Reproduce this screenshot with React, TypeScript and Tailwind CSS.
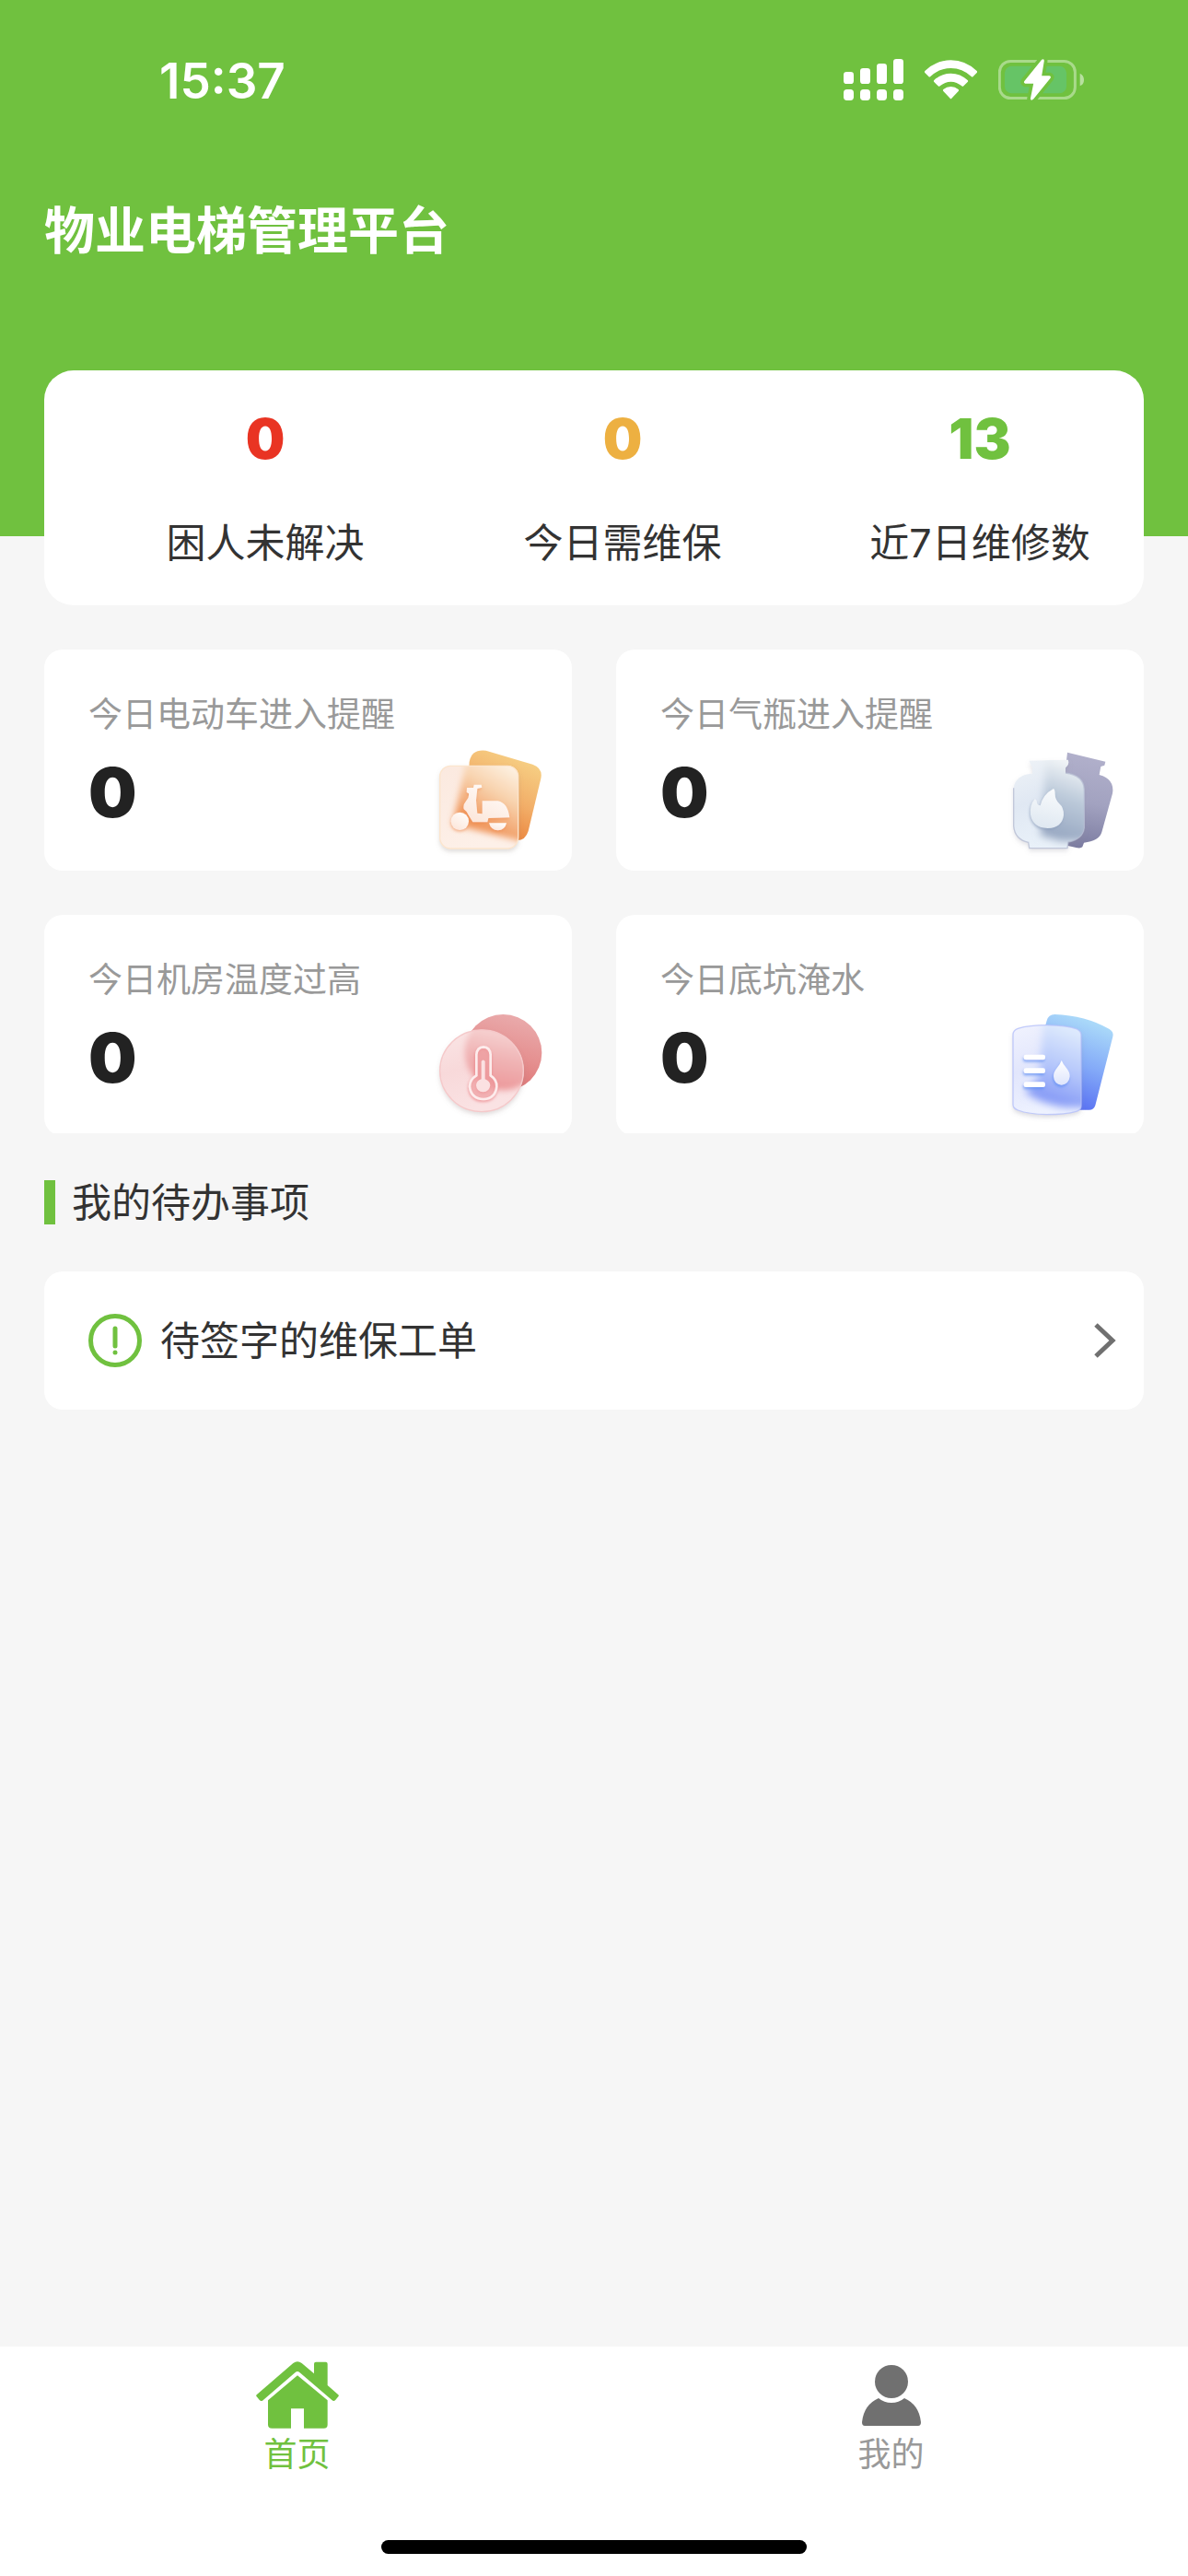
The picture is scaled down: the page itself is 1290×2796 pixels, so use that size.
import type { ReactNode } from 'react';

function SignalIcon() {
  return (
    <svg viewBox="108 72 195 135" className="h-[45px] w-[65px]" fill="#fff" aria-hidden="true">
      <rect x="108" y="114" width="33" height="39" rx="10" />
      <rect x="162" y="102" width="33" height="51" rx="10" />
      <rect x="216" y="87" width="33" height="66" rx="10" />
      <rect x="270" y="72" width="33" height="81" rx="10" />
      <rect x="108" y="171" width="33" height="36" rx="11" />
      <rect x="162" y="171" width="33" height="36" rx="11" />
      <rect x="216" y="171" width="33" height="36" rx="11" />
      <rect x="270" y="171" width="33" height="36" rx="11" />
    </svg>
  );
}

function WifiIcon() {
  return (
    <svg viewBox="372 72 171 135" className="h-[45px] w-[57px]" fill="#fff" aria-hidden="true">
      <path d="M373 111 Q410 76 457.500 76 Q505 76 542 111 Q545 114 542 117 L530 129 Q527 132 524 129 Q495 102 457.500 102 Q420 102 391 129 Q388 132 385 129 L373 117 Q370 114 373 111 Z" />
      <path d="M403 141 Q427 119 457.500 119 Q488 119 512 141 Q515 144 512 147 L499 160 Q496 163 493 160 Q477 146 457.500 146 Q438 146 422 160 Q419 163 416 160 L403 147 Q400 144 403 141 Z" />
      <path d="M433 171 Q444 162 457.500 162 Q471 162 482 171 Q485 174 482 177 L460 200 Q457.500 203 455 200 L433 177 Q430 174 433 171 Z" />
    </svg>
  );
}

function BatteryIcon() {
  return (
    <svg viewBox="612 72 280 135" className="h-[45px] w-[93px]" aria-hidden="true">
      <rect x="616" y="79" width="247" height="121" rx="36" fill="none" stroke="#fff" strokeOpacity="0.4" strokeWidth="9" />
      <rect x="633" y="95" width="202" height="89" rx="23" fill="#66c466" />
      <path d="M879 119 Q892 125 892 140 Q892 155 879 160 Z" fill="#fff" fillOpacity="0.5" />
      <path
        d="M754 74 Q762 69 762 78 L754 127 L779 127 Q786 129 782 135 L727 203 Q719 210 717 202 L727 152 L700 152 Q693 149 698 143 Z"
        fill="#fff"
        stroke="#70c13f"
        strokeWidth="22"
        strokeLinejoin="round"
        paintOrder="stroke"
      />
    </svg>
  );
}

function ScooterIcon() {
  return (
    <svg viewBox="36 24 372 372" className="size-[124px]" aria-hidden="true">
      <defs>
        <linearGradient id="scBack" x1="0.85" y1="0.15" x2="0.5" y2="1">
          <stop offset="0" stopColor="#f6cd82" />
          <stop offset="0.5" stopColor="#f2ae68" />
          <stop offset="1" stopColor="#ea813a" />
        </linearGradient>
        <linearGradient id="scFront" x1="0.9" y1="0" x2="0.4" y2="1">
          <stop offset="0.05" stopColor="#fffaf2" />
          <stop offset="0.45" stopColor="#f8d3ae" />
          <stop offset="0.85" stopColor="#f0955a" />
        </linearGradient>
        <linearGradient id="scBase" x1="0" y1="0" x2="0.4" y2="1">
          <stop offset="0" stopColor="#fbe9df" />
          <stop offset="1" stopColor="#fdf0e8" />
        </linearGradient>
        <linearGradient id="scGlyph" x1="0.8" y1="0" x2="0.2" y2="1">
          <stop offset="0" stopColor="#fffdfb" />
          <stop offset="1" stopColor="#fce6da" />
        </linearGradient>
        <clipPath id="scClip">
          <rect x="55" y="93" width="257" height="271" rx="36" />
        </clipPath>
        <filter id="scBlur" x="-30%" y="-30%" width="160%" height="160%">
          <feGaussianBlur stdDeviation="11" />
        </filter>
        <filter id="scDrop" x="-30%" y="-30%" width="160%" height="160%">
          <feDropShadow dx="0" dy="9" stdDeviation="8" floodColor="#8a8078" floodOpacity="0.28" />
        </filter>
        <filter id="scGlow" x="-30%" y="-30%" width="160%" height="160%">
          <feDropShadow dx="-1" dy="6" stdDeviation="5" floodColor="#ee8848" floodOpacity="0.5" />
        </filter>
      </defs>
      <path d="M206 44 L358 89 Q392 101 385 135 L344 306 Q335 336 308 336 L140 290 L152 80 Q160 38 206 44 Z" fill="url(#scBack)" />
      <rect x="55" y="93" width="257" height="271" rx="36" fill="url(#scBase)" filter="url(#scDrop)" />
      <g clipPath="url(#scClip)">
        <path d="M146 60 L340 60 L340 350 L300 334 L98 284 Z" fill="url(#scFront)" filter="url(#scBlur)" />
      </g>
      <rect x="56" y="94" width="255" height="269" rx="35" fill="none" stroke="#fce5cd" strokeWidth="4" />
      <g fill="url(#scGlyph)" filter="url(#scGlow)">
        <circle cx="121" cy="274" r="29" />
        <path d="M167 155 L191 155 L193 164 L178 168 L174 206 L178 248 L194 250 L194 208 L245 208 Q277 214 283 262 L214 264 L211 277 L163 277 L151 257 Q146 243 134 235 Q130 221 142 207 Q152 197 150 184 L143 180 L144 165 L165 165 Z" />
        <path d="M216 280 L273 280 Q268 303 245 304 Q222 303 216 280 Z" />
      </g>
    </svg>
  );
}

function GasIcon() {
  return (
    <svg viewBox="36 24 372 372" className="size-[124px]" aria-hidden="true">
      <defs>
        <linearGradient id="gsBack" x1="0.3" y1="0" x2="0.2" y2="1">
          <stop offset="0" stopColor="#b1b0cb" />
          <stop offset="0.5" stopColor="#a2a2c0" />
          <stop offset="1" stopColor="#7a7a9f" />
        </linearGradient>
        <linearGradient id="gsBase" x1="0" y1="0" x2="0.3" y2="1">
          <stop offset="0" stopColor="#eff3f7" />
          <stop offset="0.5" stopColor="#e0e8f3" />
          <stop offset="1" stopColor="#e9f1f9" />
        </linearGradient>
        <linearGradient id="gsHaze" x1="0.6" y1="0" x2="0.4" y2="1">
          <stop offset="0.1" stopColor="#f3f6f8" />
          <stop offset="0.5" stopColor="#bccada" />
          <stop offset="1" stopColor="#95a5c0" />
        </linearGradient>
        <linearGradient id="gsFlame" x1="0.6" y1="0" x2="0.4" y2="1">
          <stop offset="0" stopColor="#f8fafc" />
          <stop offset="1" stopColor="#dfe8f1" />
        </linearGradient>
        <path
          id="gsBottle"
          d="M112 77 L239 74 Q245 88 231 99 L231 117 Q290 124 292 170 L292 295 Q288 332 240 342 L237 362 L113 362 L110 343 Q66 334 62 290 L62 166 Q68 122 123 119 L123 99 Z"
        />
        <clipPath id="gsClip">
          <use href="#gsBottle" />
        </clipPath>
        <filter id="gsBlur" x="-30%" y="-30%" width="160%" height="160%">
          <feGaussianBlur stdDeviation="13" />
        </filter>
        <filter id="gsDrop" x="-30%" y="-30%" width="160%" height="160%">
          <feDropShadow dx="0" dy="9" stdDeviation="8" floodColor="#8a8a98" floodOpacity="0.25" />
        </filter>
        <filter id="gsGlow" x="-30%" y="-30%" width="160%" height="160%">
          <feDropShadow dx="-2" dy="5" stdDeviation="5" floodColor="#8b9dba" floodOpacity="0.7" />
        </filter>
      </defs>
      <path
        d="M237 50 L361 80 L358 92 L346 96 L341 123 Q392 137 384 184 L349 310 Q339 340 291 344 L286 358 Q280 364 262 359 L200 345 L200 120 L230 112 Z"
        fill="url(#gsBack)"
      />
      <use href="#gsBottle" fill="url(#gsBase)" filter="url(#gsDrop)" />
      <g clipPath="url(#gsClip)">
        <path d="M170 50 L310 60 L310 340 L215 338 L150 320 Z" fill="url(#gsHaze)" filter="url(#gsBlur)" />
      </g>
      <path
        d="M62 166 L62 290 Q66 334 110 343 L113 362 L237 362 L240 342 Q288 332 292 295 L292 170 Q290 124 231 117"
        fill="none"
        stroke="#b3bad0"
        strokeOpacity="0.75"
        strokeWidth="4"
      />
      <path
        d="M192 168 Q197 171 197 185 Q197 203 210 216 Q226 230 225 254 Q220 295 173 297 Q125 296 117 253 Q114 220 131 202 Q137 203 138 213 Q140 223 149 223 Q157 187 192 168 Z"
        fill="url(#gsFlame)"
        filter="url(#gsGlow)"
      />
    </svg>
  );
}

function TemperatureIcon() {
  return (
    <svg viewBox="36 33 372 372" className="size-[124px]" aria-hidden="true">
      <defs>
        <linearGradient id="tpBack" x1="0.8" y1="0.1" x2="0.55" y2="1">
          <stop offset="0" stopColor="#e9a8a9" />
          <stop offset="0.5" stopColor="#e59090" />
          <stop offset="1" stopColor="#dd7373" />
        </linearGradient>
        <linearGradient id="tpBase" x1="0" y1="0" x2="0.3" y2="1">
          <stop offset="0" stopColor="#fae6e6" />
          <stop offset="0.5" stopColor="#f8d9da" />
          <stop offset="1" stopColor="#fae2e3" />
        </linearGradient>
        <linearGradient id="tpHaze" x1="0.6" y1="0" x2="0.4" y2="1">
          <stop offset="0.1" stopColor="#f8dedd" />
          <stop offset="0.6" stopColor="#f0b3b4" />
          <stop offset="1" stopColor="#ec9799" />
        </linearGradient>
        <clipPath id="tpClip">
          <ellipse cx="192" cy="232" rx="137" ry="134" />
        </clipPath>
        <filter id="tpBlur" x="-30%" y="-30%" width="160%" height="160%">
          <feGaussianBlur stdDeviation="9" />
        </filter>
        <filter id="tpDrop" x="-30%" y="-30%" width="160%" height="160%">
          <feDropShadow dx="0" dy="9" stdDeviation="8" floodColor="#8a7878" floodOpacity="0.26" />
        </filter>
        <filter id="tpGlow" x="-60%" y="-30%" width="220%" height="160%">
          <feDropShadow dx="-1" dy="5" stdDeviation="5" floodColor="#ea6f75" floodOpacity="0.7" />
        </filter>
      </defs>
      <ellipse cx="262" cy="173" rx="126" ry="125" fill="url(#tpBack)" />
      <ellipse cx="192" cy="232" rx="137" ry="134" fill="url(#tpBase)" filter="url(#tpDrop)" />
      <g clipPath="url(#tpClip)">
        <circle cx="262" cy="170" r="125" fill="url(#tpHaze)" filter="url(#tpBlur)" />
      </g>
      <ellipse cx="192" cy="232" rx="136" ry="133" fill="none" stroke="#f5c9ca" strokeWidth="4" />
      <g filter="url(#tpGlow)">
        <path
          d="M175 247 L175 179 Q177 155 198 154 Q219 155 221 179 L221 247 Q242 261 241 283 Q237 322 198 324 Q157 322 153 283 Q153 260 175 247 Z"
          fill="#f0a5a8"
          fillOpacity="0.5"
          stroke="#fdecec"
          strokeWidth="8"
        />
        <path d="M191 259 L191 201 Q197 192 203 201 L203 259 Q219 265 220 279 Q217 300 197 301 Q176 300 174 279 Q175 264 191 259 Z" fill="#fbe1e2" />
      </g>
    </svg>
  );
}

function WaterIcon() {
  return (
    <svg viewBox="36 33 372 372" className="size-[124px]" aria-hidden="true">
      <defs>
        <linearGradient id="wtBack" x1="0.75" y1="0.1" x2="0.5" y2="1">
          <stop offset="0" stopColor="#a9d8f9" />
          <stop offset="0.5" stopColor="#83a9f8" />
          <stop offset="1" stopColor="#5870f2" />
        </linearGradient>
        <linearGradient id="wtBase" x1="0" y1="0" x2="0.3" y2="1">
          <stop offset="0" stopColor="#f1f3fe" />
          <stop offset="0.5" stopColor="#e2e6fc" />
          <stop offset="1" stopColor="#eef2ff" />
        </linearGradient>
        <linearGradient id="wtHaze" x1="0.65" y1="0.1" x2="0.4" y2="1">
          <stop offset="0" stopColor="#dfebfd" />
          <stop offset="0.5" stopColor="#b5c7fb" />
          <stop offset="1" stopColor="#7d92f5" />
        </linearGradient>
        <linearGradient id="wtDrop" x1="0" y1="0" x2="0" y2="1">
          <stop offset="0" stopColor="#ffffff" />
          <stop offset="1" stopColor="#dee5fc" />
        </linearGradient>
        <path id="wtSheet" d="M60 114 Q60 100 76 94 Q112 83 171 83 Q236 84 268 96 Q282 103 282 116 L282 346 Q282 360 266 364 Q230 374 170 374 Q110 373 76 360 Q60 354 60 342 Z" />
        <clipPath id="wtClip">
          <use href="#wtSheet" />
        </clipPath>
        <filter id="wtBlur" x="-30%" y="-30%" width="160%" height="160%">
          <feGaussianBlur stdDeviation="12" />
        </filter>
        <filter id="wtShadow" x="-30%" y="-30%" width="160%" height="160%">
          <feDropShadow dx="0" dy="9" stdDeviation="8" floodColor="#7d7d90" floodOpacity="0.28" />
        </filter>
        <filter id="wtGlow" x="-40%" y="-40%" width="180%" height="180%">
          <feDropShadow dx="-2" dy="7" stdDeviation="4" floodColor="#5c8cf2" floodOpacity="0.7" />
        </filter>
      </defs>
      <path d="M170 68 Q175 49 196 48 Q295 51 374 96 Q389 105 385 121 L328 344 Q323 359 308 359 L150 359 L150 140 Z" fill="url(#wtBack)" />
      <use href="#wtSheet" fill="url(#wtBase)" filter="url(#wtShadow)" />
      <g clipPath="url(#wtClip)">
        <path d="M160 60 L310 60 L310 352 L225 350 Q140 335 100 300 L146 250 Z" fill="url(#wtHaze)" filter="url(#wtBlur)" />
      </g>
      <use href="#wtSheet" fill="none" stroke="#b4bffa" strokeOpacity="0.8" strokeWidth="4" />
      <g filter="url(#wtGlow)">
        <rect x="95" y="179" width="70" height="17" rx="7" fill="#fff" />
        <rect x="95" y="223" width="70" height="17" rx="7" fill="#fff" />
        <rect x="95" y="268" width="70" height="17" rx="7" fill="#fff" />
        <path d="M218 198 Q224 212 234 223 Q245 236 245 250 Q242 276 218 278 Q194 276 192 250 Q192 236 203 223 Q213 212 218 198 Z" fill="url(#wtDrop)" />
      </g>
    </svg>
  );
}

function HomeIcon() {
  return (
    <svg viewBox="36 40 270 219" className="h-[73px] w-[90px]" fill="#70c13f" aria-hidden="true">
      <path d="M38 149 L157 46 Q171 36 185 46 L225 80 L225 48 Q225 42 231 42 L263 42 Q269 42 269 48 L269 118 L304 149 Q307 152 304 155 L294 167 Q289 171 284 167 L178 76 Q171 70 164 76 L57 168 Q52 171 48 167 L38 155 Q35 152 38 149 Z" />
      <path d="M171 86 L269 167 L269 246 Q269 258 257 258 L192 258 L192 194 L150 194 L150 258 L88 258 Q75 258 75 246 L75 167 Z" />
    </svg>
  );
}

function PersonIcon() {
  return (
    <svg viewBox="0 0 64 66" className="h-[66px] w-[64px]" fill="#707070" aria-hidden="true">
      <circle cx="32" cy="18" r="18" />
      <path d="M18 36 Q24 41 32 41 Q40 41 46 36 Q62 43 64 62 Q64 66 61 66 L3 66 Q0 66 0 62 Q2 43 18 36 Z" />
    </svg>
  );
}

function AlertIcon() {
  return (
    <svg viewBox="0 0 58 58" className="size-[58px]" aria-hidden="true">
      <circle cx="29" cy="29" r="26.500" fill="none" stroke="#70c13f" strokeWidth="5" />
      <path d="M29 16 L29 35" stroke="#70c13f" strokeWidth="5" strokeLinecap="round" />
      <circle cx="29" cy="42" r="2.500" fill="#70c13f" />
    </svg>
  );
}

const summary = [
  { label: '困人未解决', value: 0, color: 'text-[#e93423]' },
  { label: '今日需维保', value: 0, color: 'text-[#edb041]' },
  { label: '近7日维修数', value: 13, color: 'text-[#70c13f]' },
];

const alerts: { label: string; value: number; icon: ReactNode }[] = [
  { label: '今日电动车进入提醒', value: 0, icon: <ScooterIcon /> },
  { label: '今日气瓶进入提醒', value: 0, icon: <GasIcon /> },
  { label: '今日机房温度过高', value: 0, icon: <TemperatureIcon /> },
  { label: '今日底坑淹水', value: 0, icon: <WaterIcon /> },
];

export default function App() {
  return (
    <div className="flex min-h-screen flex-col bg-[#f6f6f6] font-['Inter','Noto_Sans_CJK_SC',sans-serif] text-[#333]">
      <header className="bg-[#70c13f] pb-[296px] text-white">
        <div className="flex h-44 items-center justify-between pr-[113px] pl-[173px]">
          <span className="text-[53px] leading-[64px] font-semibold">15:37</span>
          <div className="flex items-center gap-[23px] pb-[3px]">
            <SignalIcon />
            <WifiIcon />
            <BatteryIcon />
          </div>
        </div>
        <h1 className="mt-[38px] px-12 text-[55px] leading-[72px] font-bold">物业电梯管理平台</h1>
      </header>

      <main className="-mt-[180px] flex-1 px-12">
        <section className="rounded-[32px] bg-white pt-[38px] pb-9 pl-[46px]">
          <div className="-mr-4 grid grid-cols-3">
            {summary.map((item) => (
              <div key={item.label} className="flex flex-col items-center">
                <span className={`text-[60px] leading-[72px] font-black ${item.color}`}>{item.value}</span>
                <span className="mt-[46px] text-[43px] leading-[63px] whitespace-nowrap">{item.label}</span>
              </div>
            ))}
          </div>
        </section>

        <section className="mt-12 overflow-hidden">
          <div className="-mb-[3px] grid grid-cols-2 gap-12">
            {alerts.map((item) => (
              <div key={item.label} className="rounded-[20px] bg-white pt-[47px] pr-[26px] pb-[13px] pl-12">
                <p className="text-[37px] leading-[48px] text-[#999]">{item.label}</p>
                <div className="flex items-start justify-between">
                  <span className="mt-6 text-[74px] leading-[72px] font-black text-[#222]">{item.value}</span>
                  <div className="mt-2">{item.icon}</div>
                </div>
              </div>
            ))}
          </div>
        </section>

        <section className="mt-[43px]">
          <div className="flex items-center gap-[18px]">
            <span className="h-12 w-3 bg-[#70c13f]" />
            <h2 className="text-[43px] leading-[64px]">我的待办事项</h2>
          </div>
          <a href="#orders" className="mt-[43px] flex h-[150px] items-center rounded-[20px] bg-white pr-[30px] pl-12">
            <AlertIcon />
            <span className="ml-5 flex-1 text-[43px] leading-[64px]">待签字的维保工单</span>
            <svg viewBox="0 0 24 38" className="h-[38px] w-6" fill="none" stroke="#707070" strokeWidth="5" aria-hidden="true">
              <path d="M2 2 L20 19 L2 36" />
            </svg>
          </a>
        </section>
      </main>

      <nav className="bg-white">
        <div className="grid grid-cols-2">
          <a href="#home" className="flex flex-col items-center pt-4 text-[#70c13f]">
            <HomeIcon />
            <span className="mt-1 text-[36px] leading-[48px]">首页</span>
          </a>
          <a href="#me" className="flex flex-col items-center pt-5 text-[#999]">
            <PersonIcon />
            <span className="mt-[7px] text-[36px] leading-[48px]">我的</span>
          </a>
        </div>
        <div className="mx-auto mt-[69px] mb-6 h-[15px] w-[462px] rounded-full bg-black" />
      </nav>
    </div>
  );
}
